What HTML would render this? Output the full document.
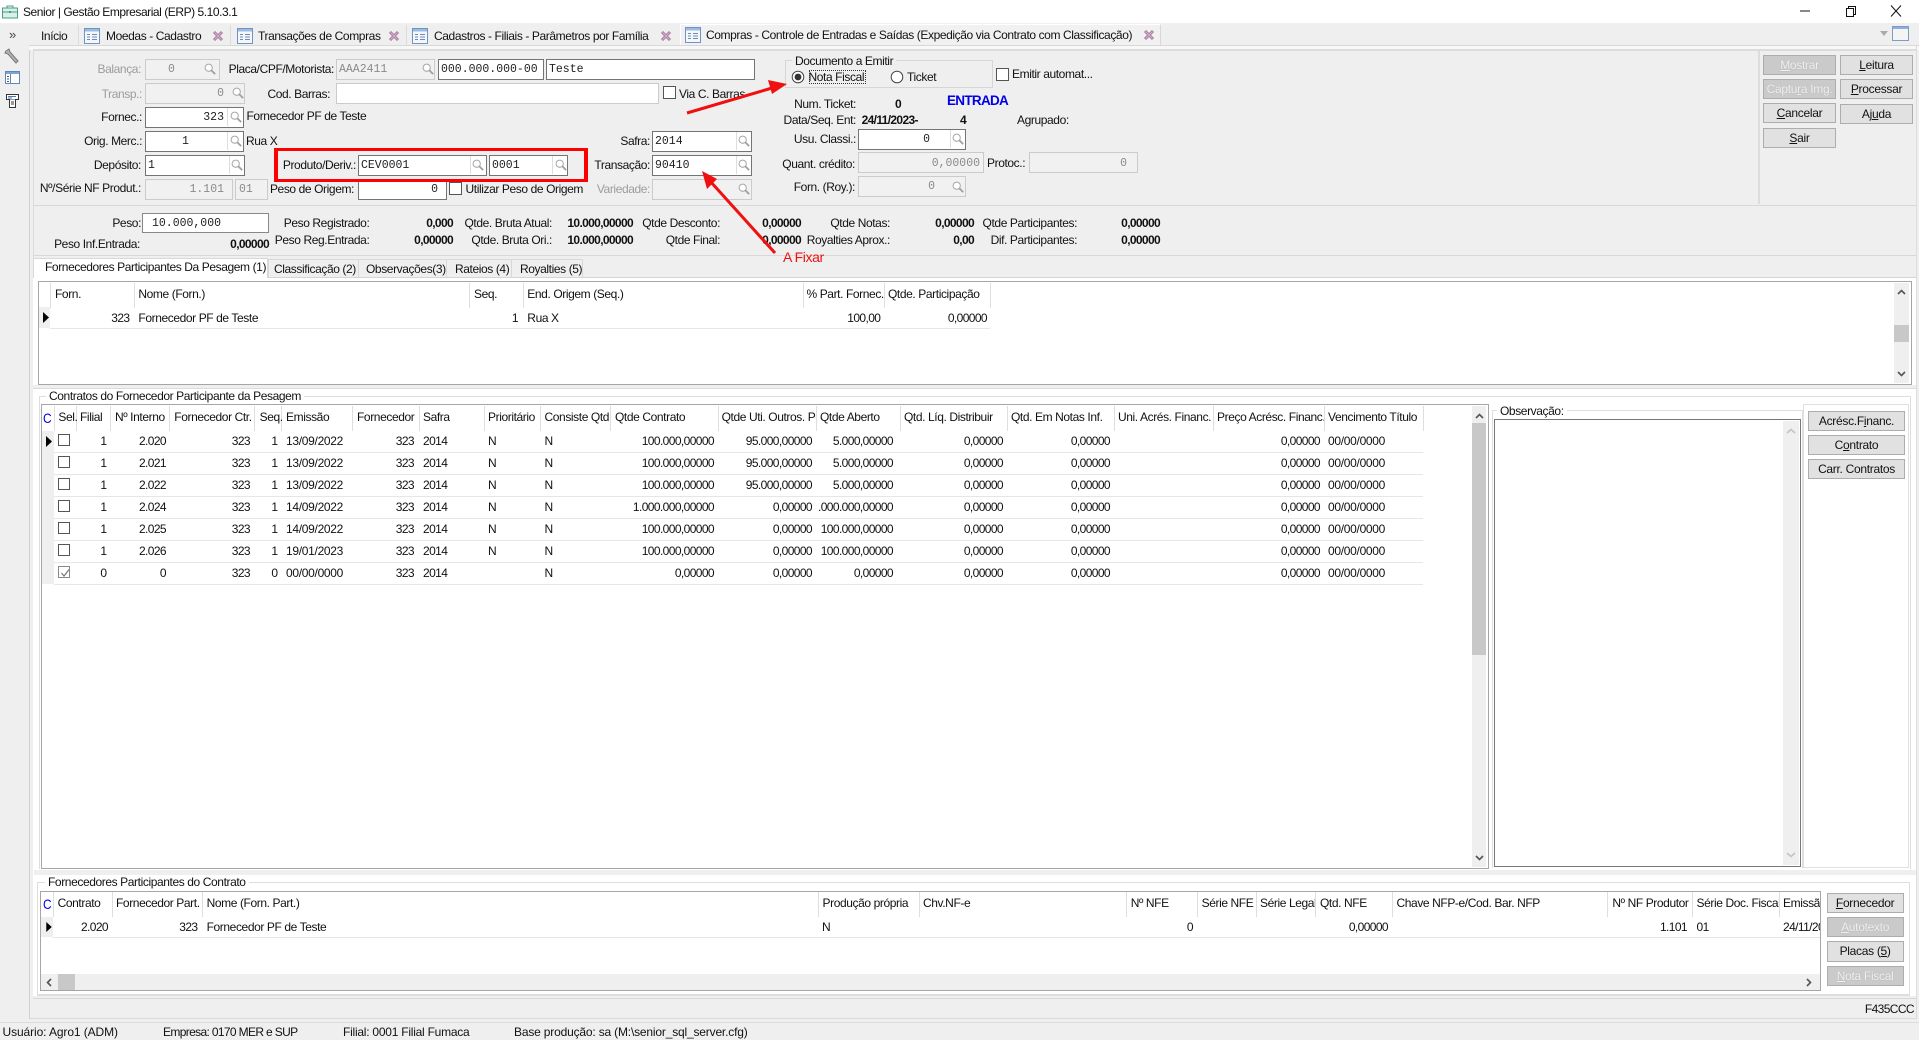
<!DOCTYPE html>
<html lang="pt"><head><meta charset="utf-8"><title>Senior | Gestão Empresarial (ERP) 5.10.3.1</title>
<style>
html,body{margin:0;padding:0}
body{position:relative;width:1919px;height:1040px;overflow:hidden;background:#efefef;font:12px/14px "Liberation Sans",sans-serif;color:#111}
.a,.t,.m,.b,.d,.btn,.off,.ck,.v,.h,svg{position:absolute}
.a{display:block}
.t,.m{white-space:nowrap;height:14px}
.t{letter-spacing:-.4px}
.r{transform:translateX(-100%)}
.m{font-family:"Liberation Mono",monospace;font-size:11.5px;color:#222;margin-top:1px}
.g{color:#9c9c9c}
.gm{color:#8a8a8a}
.t.B{font-weight:bold;letter-spacing:-.65px}
.t.n{letter-spacing:-.6px}
.b,.d{box-sizing:border-box;background:#fff;border:1px solid #747474}
.d{background:#f1f1f1;border-color:#cbcbcb}
.v{top:0;width:1px;background:#dedede}
.h{left:0;height:1px;background:#dedede}
.btn,.off{box-sizing:border-box;background:#e1e1e1;border:1px solid #adadad;text-align:center;line-height:19px;color:#111;letter-spacing:-.3px}
.off{background:#cacaca;color:#f0f0f0;text-shadow:0 0 1px #aaa}
.ck{box-sizing:border-box;width:13px;height:13px;background:#fff;border:1px solid #555}
.row{position:absolute;left:0;width:1423px;height:22px}
.row:after{content:"";position:absolute;left:54px;right:0;bottom:0;height:1px;background:#e6e6e6}
.row .t{top:3px;letter-spacing:-.6px}
.row .t.x5,.row .t.x16{letter-spacing:-.3px}
.row .t.x8,.row .t.x9{letter-spacing:0}
.x1{left:106.5px}.x2{left:166px}.x3{left:250px}.x4{left:277.5px}.x5{left:286px}.x6{left:414px}.x7{left:423px}.x8{left:488px}.x9{left:544.5px}.x10{left:714px}.x11{left:812px}.x12{left:893px}.x13{left:1003px}.x14{left:1110px}.x15{left:1320px}.x16{left:1328px}
.row .ck{left:58px;top:3px;width:12px;height:12px}
.C{font-size:14px;color:#0000e6;transform:scaleX(.85);transform-origin:left}
</style></head>
<body>
<svg width="0" height="0" style="left:0;top:0">
<defs>
<symbol id="s" viewBox="0 0 14 14"><circle cx="5.5" cy="5.5" r="4.2" fill="#fff" stroke="#a8a8a8" stroke-width="1.2"/><path d="M8.6 8.6L13 13" stroke="#a0a0a0" stroke-width="2.2" fill="none"/></symbol>
<symbol id="w" viewBox="0 0 16 16"><rect x=".5" y=".5" width="15" height="15" fill="#f4f8fc" stroke="#6f93c4"/><rect x="1" y="1" width="14" height="2.5" fill="#9dbbe0"/><path d="M3 6.5h3M3 9h3M3 11.5h3M8 6.5h5M8 9h5M8 11.5h5" stroke="#6f8aae"/></symbol>
<symbol id="x" viewBox="0 0 12 12"><path d="M2 2L10 10M10 2L2 10" stroke="#a77a9c" stroke-width="3" fill="none"/><path d="M2.5 2.5L9.5 9.5M9.5 2.5L2.5 9.5" stroke="#d2b3cb" stroke-width="1" fill="none"/></symbol>
<symbol id="tri" viewBox="0 0 6 11"><path d="M0 0L6 5.5L0 11Z" fill="#000"/></symbol>
</defs>
</svg>

<!-- title bar -->
<div class="a" style="left:0;top:0;width:1919px;height:23px;background:#fff"></div>
<svg style="left:2px;top:5px" width="17" height="14" viewBox="0 0 17 14"><rect x=".5" y="3" width="15" height="10" fill="#d9efe8" stroke="#4a9c88"/><path d="M5 3V1h6v2M1 7h14" stroke="#4a9c88" fill="none"/><rect x="7" y="6" width="2" height="2" fill="#4a9c88"/></svg>
<span class="t" style="left:23px;top:5px;letter-spacing:-.45px">Senior | Gestão Empresarial (ERP) 5.10.3.1</span>
<svg style="left:1798px;top:4px" width="112" height="14"><path d="M2 7h10" stroke="#111"/><path d="M48.5 4.5h7v8h-7zM50.5 4.5v-2h7v8h-2" fill="none" stroke="#111"/><path d="M93 1.5L103 12.5M103 1.5L93 12.5" stroke="#111" fill="none"/></svg>

<!-- tabs -->
<span class="t" style="left:9px;top:28px;font-size:13px;color:#444">»</span>
<span class="t" style="left:41px;top:29px">Início</span>
<div class="a" style="left:78px;top:25px;width:1px;height:21px;background:#ddd"></div>
<svg style="left:84px;top:28px" width="16" height="16"><use href="#w"/></svg>
<span class="t" style="left:106px;top:29px">Moedas - Cadastro</span>
<svg style="left:212px;top:30px" width="12" height="12"><use href="#x"/></svg>
<div class="a" style="left:230px;top:25px;width:1px;height:21px;background:#ddd"></div>
<svg style="left:237px;top:28px" width="16" height="16"><use href="#w"/></svg>
<span class="t" style="left:258px;top:29px">Transações de Compras</span>
<svg style="left:388px;top:30px" width="12" height="12"><use href="#x"/></svg>
<div class="a" style="left:406px;top:25px;width:1px;height:21px;background:#ddd"></div>
<svg style="left:412px;top:28px" width="16" height="16"><use href="#w"/></svg>
<span class="t" style="left:434px;top:29px">Cadastros - Filiais - Parâmetros por Família</span>
<svg style="left:660px;top:30px" width="12" height="12"><use href="#x"/></svg>
<div class="a" style="left:680px;top:24px;width:481px;height:22px;background:#f1f1f1;border:1px solid #fff;box-sizing:border-box;border-right:1px solid #d8d8d8"></div>
<svg style="left:685px;top:27px" width="16" height="16"><use href="#w"/></svg>
<span class="t" style="left:706px;top:28px">Compras - Controle de Entradas e Saídas (Expedição via Contrato com Classificação)</span>
<svg style="left:1143px;top:29px" width="12" height="12"><use href="#x"/></svg>
<svg style="left:1878px;top:26px" width="32" height="17"><path d="M2 5h8l-4 5z" fill="#aaa"/><rect x="14.5" y=".5" width="16" height="14" fill="#f4f4f4" stroke="#7c9cc8"/><rect x="15" y="1" width="15" height="2" fill="#8fb0dc"/></svg>

<!-- sidebar -->
<svg style="left:4px;top:48px" width="17" height="16" viewBox="0 0 17 16"><path d="M2 3L5 1L6 4L14 13L12 15L4 6L1 5Z" fill="#b4b4b4" stroke="#777"/></svg>
<svg style="left:5px;top:71px" width="15" height="13"><rect x=".5" y=".5" width="14" height="12" fill="#fff" stroke="#5f87bd"/><rect x="1" y="1" width="13" height="2" fill="#7fa3d3"/><path d="M5.5 3v9" stroke="#5f87bd"/><path d="M2 5.5h2M2 8h2M2 10.5h2" stroke="#555"/></svg>
<svg style="left:5px;top:93px" width="15" height="15"><rect x="1.5" y="1.5" width="12" height="5" fill="#fff" stroke="#333"/><path d="M3 3.5h8M3 5h4" stroke="#4a7ab8"/><path d="M4.5 6.5v8h6v-8M6 9h3M6 11h3" fill="#fff" stroke="#333"/></svg>

<!-- frame -->
<div class="a" style="left:29px;top:46px;width:1px;height:972px;background:#d0d0d0"></div>
<div class="a" style="left:29px;top:45px;width:1890px;height:5px;background:#f8f8f8;border-top:1px solid #d8d8d8;box-sizing:border-box"></div>
<div class="a" style="left:33px;top:49px;width:1883px;height:2px;background:#dcdcdc"></div>
<div class="a" style="left:33px;top:50px;width:1px;height:946px;background:#dcdcdc"></div>
<div class="a" style="left:1916px;top:46px;width:1px;height:972px;background:#dcdcdc"></div>
<div class="a" style="left:1758px;top:51px;width:2px;height:153px;background:#dcdcdc"></div>
<div class="a" style="left:33px;top:205px;width:1883px;height:1px;background:#d8d8d8"></div>
<div class="a" style="left:33px;top:255px;width:1883px;height:1px;background:#d8d8d8"></div>

<!-- form: row 1 -->
<span class="t r g" style="left:141px;top:62px">Balança:</span>
<div class="d" style="left:144.5px;top:58.5px;width:75px;height:21px"></div>
<span class="m gm" style="left:168px;top:62px">0</span>
<svg style="left:204px;top:63px" width="12" height="12"><use href="#s"/></svg>
<span class="t r" style="left:334px;top:62px">Placa/CPF/Motorista:</span>
<div class="d" style="left:336px;top:58.5px;width:99px;height:21px"></div>
<span class="m gm" style="left:339px;top:62px">AAA2411</span>
<svg style="left:422px;top:63px" width="12" height="12"><use href="#s"/></svg>
<div class="b" style="left:438px;top:58.5px;width:106px;height:21px"></div>
<span class="m" style="left:441px;top:62px">000.000.000-00</span>
<div class="b" style="left:546px;top:58.5px;width:209px;height:21px"></div>
<span class="m" style="left:549px;top:62px">Teste</span>

<!-- row 2 -->
<span class="t r g" style="left:142px;top:87px">Transp.:</span>
<div class="d" style="left:144.5px;top:82.5px;width:100.5px;height:21px"></div>
<span class="m r gm" style="left:224px;top:86px">0</span>
<svg style="left:232px;top:87px" width="12" height="12"><use href="#s"/></svg>
<span class="t r" style="left:330px;top:87px">Cod. Barras:</span>
<div class="d" style="left:336px;top:82.5px;width:323px;height:21px;background:#fff"></div>
<div class="ck" style="left:663px;top:86px"></div>
<span class="t" style="left:679px;top:87px">Via C. Barras</span>

<!-- row 3 -->
<span class="t r" style="left:142px;top:110px">Fornec.:</span>
<div class="b" style="left:144.5px;top:106.5px;width:99.5px;height:21px"></div>
<span class="m r" style="left:224px;top:110px">323</span>
<div class="a" style="left:227px;top:108px;width:1px;height:18px;background:#ddd"></div>
<svg style="left:230px;top:111px" width="12" height="12"><use href="#s"/></svg>
<span class="t" style="left:246.5px;top:109px">Fornecedor PF de Teste</span>

<!-- row 4 -->
<span class="t r" style="left:142px;top:134px">Orig. Merc.:</span>
<div class="b" style="left:144.5px;top:130.5px;width:99.5px;height:21px"></div>
<span class="m" style="left:182px;top:134px">1</span>
<div class="a" style="left:227px;top:132px;width:1px;height:18px;background:#ddd"></div>
<svg style="left:230px;top:135px" width="12" height="12"><use href="#s"/></svg>
<span class="t" style="left:246px;top:134px">Rua X</span>
<span class="t r" style="left:650px;top:134px">Safra:</span>
<div class="b" style="left:652px;top:130.5px;width:99.5px;height:21px"></div>
<span class="m" style="left:655px;top:134px">2014</span>
<div class="a" style="left:735.5px;top:132px;width:1px;height:18px;background:#ddd"></div>
<svg style="left:738px;top:135px" width="12" height="12"><use href="#s"/></svg>

<!-- row 5 -->
<span class="t r" style="left:141px;top:158px">Depósito:</span>
<div class="b" style="left:144.5px;top:154.5px;width:100.5px;height:21px"></div>
<span class="m" style="left:148px;top:158px">1</span>
<div class="a" style="left:229px;top:156px;width:1px;height:18px;background:#ddd"></div>
<svg style="left:231px;top:159px" width="12" height="12"><use href="#s"/></svg>
<span class="t r" style="left:356px;top:158px">Produto/Deriv.:</span>
<div class="b" style="left:358px;top:154.5px;width:128.5px;height:21px"></div>
<span class="m" style="left:361px;top:158px">CEV0001</span>
<div class="a" style="left:470px;top:156px;width:1px;height:18px;background:#ddd"></div>
<svg style="left:472px;top:159px" width="12" height="12"><use href="#s"/></svg>
<div class="b" style="left:489px;top:154.5px;width:79px;height:21px"></div>
<span class="m" style="left:492px;top:158px">0001</span>
<div class="a" style="left:552px;top:156px;width:1px;height:18px;background:#ddd"></div>
<svg style="left:555px;top:159px" width="12" height="12"><use href="#s"/></svg>
<span class="t r" style="left:650px;top:158px">Transação:</span>
<div class="b" style="left:652px;top:154.5px;width:99.5px;height:21px"></div>
<span class="m" style="left:655px;top:158px">90410</span>
<div class="a" style="left:735.5px;top:156px;width:1px;height:18px;background:#ddd"></div>
<svg style="left:738px;top:159px" width="12" height="12"><use href="#s"/></svg>

<!-- row 6 -->
<span class="t r" style="left:141px;top:181px">Nº/Série NF Produt.:</span>
<div class="d" style="left:144.5px;top:178.5px;width:88px;height:21px"></div>
<span class="m r gm" style="left:224px;top:182px">1.101</span>
<div class="d" style="left:235px;top:178.5px;width:33px;height:21px"></div>
<span class="m gm" style="left:239px;top:182px">01</span>
<span class="t r" style="left:354px;top:182px">Peso de Origem:</span>
<div class="b" style="left:358px;top:178.5px;width:88.5px;height:21px"></div>
<span class="m r" style="left:438px;top:182px">0</span>
<div class="ck" style="left:449px;top:182px"></div>
<span class="t" style="left:465.5px;top:182px">Utilizar Peso de Origem</span>
<span class="t r g" style="left:650px;top:182px">Variedade:</span>
<div class="d" style="left:652px;top:178.5px;width:99.5px;height:21px"></div>
<svg style="left:738px;top:183px" width="12" height="12"><use href="#s"/></svg>

<!-- red box -->
<div class="a" style="left:274px;top:148px;width:314px;height:34px;box-sizing:border-box;border:3px solid #f00;border-left-width:4px;border-right-width:4px"></div>

<!-- documento -->
<div class="a" style="left:784.5px;top:60px;width:208px;height:28px;box-sizing:border-box;border:1px solid #d6d6d6"></div>
<span class="t" style="left:792px;top:54px;background:#efefef;padding:0 3px">Documento a Emitir</span>
<svg style="left:791px;top:70px" width="116" height="14"><circle cx="7" cy="7" r="5.8" fill="#fff" stroke="#444"/><circle cx="7" cy="7" r="3.4" fill="#333"/><circle cx="106" cy="7" r="5.8" fill="#fff" stroke="#444"/></svg>
<span class="t" style="left:808.5px;top:70px;outline:1px dotted #333;outline-offset:-1px;width:57px">Nota Fiscal</span>
<span class="t" style="left:907px;top:70px">Ticket</span>
<div class="ck" style="left:996px;top:67.5px"></div>
<span class="t" style="left:1012px;top:67px">Emitir automat...</span>

<span class="t r" style="left:856px;top:97px">Num. Ticket:</span>
<span class="t B" style="left:895px;top:97px">0</span>
<span class="t B" style="left:947px;top:94px;font-size:13.5px;color:#0000e6;letter-spacing:-.7px">ENTRADA</span>
<span class="t r" style="left:856px;top:113px">Data/Seq. Ent:</span>
<span class="t B" style="left:861.6px;top:113px">24/11/2023-</span>
<span class="t B" style="left:960px;top:113px">4</span>
<span class="t" style="left:1017px;top:113px">Agrupado:</span>
<span class="t r" style="left:856px;top:132px">Usu. Classi.:</span>
<div class="b" style="left:858px;top:128.5px;width:108px;height:21px"></div>
<span class="m r" style="left:930px;top:132px">0</span>
<div class="a" style="left:949.5px;top:130px;width:1px;height:18px;background:#ddd"></div>
<svg style="left:952px;top:133px" width="12" height="12"><use href="#s"/></svg>
<span class="t r" style="left:855px;top:156.5px">Quant. crédito:</span>
<div class="d" style="left:858px;top:152px;width:125.7px;height:21px"></div>
<span class="m r gm" style="left:980px;top:156px">0,00000</span>
<span class="t" style="left:987px;top:155.5px">Protoc.:</span>
<div class="d" style="left:1029px;top:152px;width:108.5px;height:21px"></div>
<span class="m r gm" style="left:1127px;top:156px">0</span>
<span class="t r" style="left:855px;top:180px">Forn. (Roy.):</span>
<div class="d" style="left:858px;top:176px;width:108px;height:21px"></div>
<span class="m r gm" style="left:935px;top:179px">0</span>
<svg style="left:952px;top:181px" width="12" height="12"><use href="#s"/></svg>

<!-- right buttons -->
<div class="off" style="left:1763px;top:55px;width:73px;height:20px"><u>M</u>ostrar</div>
<div class="btn" style="left:1840px;top:55px;width:73px;height:20px"><u>L</u>eitura</div>
<div class="off" style="left:1763px;top:79px;width:73px;height:20px">Captu<u>r</u>a Img.</div>
<div class="btn" style="left:1840px;top:79px;width:73px;height:20px"><u>P</u>rocessar</div>
<div class="btn" style="left:1763px;top:103px;width:73px;height:20px"><u>C</u>ancelar</div>
<div class="btn" style="left:1840px;top:104px;width:73px;height:20px">Aj<u>u</u>da</div>
<div class="btn" style="left:1763px;top:128px;width:73px;height:20px"><u>S</u>air</div>

<!-- stats -->
<span class="t r" style="left:141px;top:216px">Peso:</span>
<div class="b" style="left:142px;top:213px;width:127px;height:20px;border-color:#888"></div>
<span class="m" style="left:152px;top:216px">10.000,000</span>
<span class="t r" style="left:369.4px;top:216px">Peso Registrado:</span>
<span class="t r B" style="left:453px;top:216px">0,000</span>
<span class="t r" style="left:552px;top:216px">Qtde. Bruta Atual:</span>
<span class="t r B" style="left:633px;top:216px">10.000,00000</span>
<span class="t r" style="left:720px;top:216px">Qtde Desconto:</span>
<span class="t r B" style="left:801px;top:216px">0,00000</span>
<span class="t r" style="left:890px;top:216px">Qtde Notas:</span>
<span class="t r B" style="left:974px;top:216px">0,00000</span>
<span class="t r" style="left:1077px;top:216px">Qtde Participantes:</span>
<span class="t r B" style="left:1160px;top:216px">0,00000</span>
<span class="t r" style="left:140px;top:237px">Peso Inf.Entrada:</span>
<span class="t r B" style="left:269px;top:237px">0,00000</span>
<span class="t r" style="left:369.4px;top:233px">Peso Reg.Entrada:</span>
<span class="t r B" style="left:453px;top:233px">0,00000</span>
<span class="t r" style="left:552px;top:233px">Qtde. Bruta Ori.:</span>
<span class="t r B" style="left:633px;top:233px">10.000,00000</span>
<span class="t r" style="left:720px;top:233px">Qtde Final:</span>
<span class="t r B" style="left:801px;top:233px">0,00000</span>
<span class="t r" style="left:890px;top:233px">Royalties Aprox.:</span>
<span class="t r B" style="left:974px;top:233px">0,00</span>
<span class="t r" style="left:1077px;top:233px">Dif. Participantes:</span>
<span class="t r B" style="left:1160px;top:233px">0,00000</span>

<!-- lower tabs -->
<div class="a" style="left:33px;top:278px;width:1883px;height:718px;background:#fff"></div>
<div class="a" style="left:33px;top:277px;width:1883px;height:1px;background:#d4d4d4"></div>
<div class="a" style="left:33px;top:258px;width:235px;height:20px;background:#fff;border:1px solid #d8d8d8;border-bottom:0;box-sizing:border-box"></div>
<span class="t" style="left:45px;top:260px">Fornecedores Participantes Da Pesagem (1)</span>
<div class="a" style="left:268px;top:259px;width:315px;height:18px;border:1px solid #d8d8d8;border-bottom:0;box-sizing:border-box"></div>
<span class="t" style="left:274px;top:262px">Classificação (2)</span>
<div class="a" style="left:358px;top:259px;width:1px;height:18px;background:#d8d8d8"></div>
<span class="t" style="left:366px;top:262px">Observações(3)</span>
<div class="a" style="left:446px;top:259px;width:1px;height:18px;background:#d8d8d8"></div>
<span class="t" style="left:455px;top:262px">Rateios (4)</span>
<div class="a" style="left:511px;top:259px;width:1px;height:18px;background:#d8d8d8"></div>
<span class="t" style="left:520px;top:262px">Royalties (5)</span>

<!-- grid 1 -->
<div class="a" style="left:37.5px;top:281px;width:1874px;height:104px;box-sizing:border-box;border:1px solid #a6a6a6;background:#fff"></div>
<div class="a" style="left:39px;top:307px;width:11px;height:21px;background:#efefef"></div>
<svg style="left:43px;top:312px" width="6" height="11"><use href="#tri"/></svg>
<div class="a" style="left:50px;top:328px;width:940px;height:1px;background:#e6e6e6"></div>
<div class="v" style="left:50px;top:283px;height:25px"></div><div class="v" style="left:133.5px;top:283px;height:25px"></div><div class="v" style="left:469px;top:283px;height:25px"></div><div class="v" style="left:522.5px;top:283px;height:25px"></div><div class="v" style="left:802.5px;top:283px;height:25px"></div><div class="v" style="left:883.7px;top:283px;height:25px"></div><div class="v" style="left:990px;top:283px;height:25px"></div>
<span class="t" style="left:55px;top:287px">Forn.</span>
<span class="t" style="left:138.4px;top:287px">Nome (Forn.)</span>
<span class="t" style="left:474px;top:287px">Seq.</span>
<span class="t" style="left:527.3px;top:287px">End. Origem (Seq.)</span>
<span class="t" style="left:806.5px;top:287px">% Part. Fornec.</span>
<span class="t" style="left:888px;top:287px">Qtde. Participação</span>
<span class="t r n" style="left:129.5px;top:311px">323</span>
<span class="t" style="left:138.4px;top:311px">Fornecedor PF de Teste</span>
<span class="t r n" style="left:518px;top:311px">1</span>
<span class="t" style="left:527.3px;top:311px">Rua X</span>
<span class="t r n" style="left:880.4px;top:311px">100,00</span>
<span class="t r n" style="left:987px;top:311px">0,00000</span>
<div class="a" style="left:1894px;top:283px;width:15px;height:100px;background:#efefef"></div>
<div class="a" style="left:1894px;top:325px;width:15px;height:17px;background:#c8c8c8"></div>
<svg style="left:1897px;top:288px" width="9" height="90"><path d="M1 6L4.5 2.5L8 6" fill="none" stroke="#555" stroke-width="1.6"/><path d="M1 84L4.5 87.5L8 84" fill="none" stroke="#555" stroke-width="1.6"/></svg>

<!-- gap -->
<div class="a" style="left:33px;top:385px;width:1883px;height:3px;background:#efefef"></div>
<div class="a" style="left:33px;top:388px;width:1883px;height:1px;background:#dcdcdc"></div>

<!-- fieldset contratos -->
<div class="a" style="left:39px;top:396px;width:1872px;height:473px;box-sizing:border-box;border:1px solid #dedede;border-bottom:0"></div>
<span class="t" style="left:46px;top:389px;background:#fff;padding:0 3px">Contratos do Fornecedor Participante da Pesagem</span>

<!-- grid 2 -->
<div class="a" style="left:41px;top:404px;width:1448px;height:465px;box-sizing:border-box;border:1px solid #a6a6a6;background:#fff"></div>
<div class="v" style="left:53.5px;top:406px;height:25px"></div><div class="v" style="left:75.5px;top:406px;height:25px"></div><div class="v" style="left:110px;top:406px;height:25px"></div><div class="v" style="left:169.4px;top:406px;height:25px"></div><div class="v" style="left:254.3px;top:406px;height:25px"></div><div class="v" style="left:281px;top:406px;height:25px"></div><div class="v" style="left:352px;top:406px;height:25px"></div><div class="v" style="left:419px;top:406px;height:25px"></div><div class="v" style="left:483.7px;top:406px;height:25px"></div><div class="v" style="left:539.6px;top:406px;height:25px"></div><div class="v" style="left:610px;top:406px;height:25px"></div><div class="v" style="left:717.6px;top:406px;height:25px"></div><div class="v" style="left:815.5px;top:406px;height:25px"></div><div class="v" style="left:899.6px;top:406px;height:25px"></div><div class="v" style="left:1006.5px;top:406px;height:25px"></div><div class="v" style="left:1113.5px;top:406px;height:25px"></div><div class="v" style="left:1212.6px;top:406px;height:25px"></div><div class="v" style="left:1323.7px;top:406px;height:25px"></div><div class="v" style="left:1423px;top:406px;height:25px"></div>
<span class="t C" style="left:43px;top:411px">C</span>
<span class="t" style="left:58.4px;top:410px">Sel.</span>
<span class="t" style="left:80px;top:410px">Filial</span>
<span class="t" style="left:115px;top:410px">Nº Interno</span>
<span class="t" style="left:174.3px;top:410px;width:80px;overflow:hidden">Fornecedor Ctr.</span>
<span class="t" style="left:259.6px;top:410px">Seq.</span>
<span class="t" style="left:286px;top:410px">Emissão</span>
<span class="t" style="left:357px;top:410px">Fornecedor</span>
<span class="t" style="left:423px;top:410px">Safra</span>
<span class="t" style="left:488px;top:410px">Prioritário</span>
<span class="t" style="left:544.5px;top:410px;width:65px;overflow:hidden">Consiste Qtd</span>
<span class="t" style="left:615px;top:410px">Qtde Contrato</span>
<span class="t" style="left:721.6px;top:410px;width:94px;overflow:hidden">Qtde Uti. Outros. Pesagem</span>
<span class="t" style="left:820px;top:410px">Qtde Aberto</span>
<span class="t" style="left:904px;top:410px">Qtd. Líq. Distribuir</span>
<span class="t" style="left:1011px;top:410px">Qtd. Em Notas Inf.</span>
<span class="t" style="left:1118px;top:410px;width:95px;overflow:hidden">Uni. Acrés. Financ.</span>
<span class="t" style="left:1217px;top:410px;width:107px;overflow:hidden">Preço Acrésc. Financ.</span>
<span class="t" style="left:1328px;top:410px">Vencimento Título</span>

<div class="a" style="left:42px;top:431px;width:11.5px;height:153px;background:#efefef"></div>
<svg style="left:46px;top:436px" width="6" height="11"><use href="#tri"/></svg>

<div class="row" style="top:431px"><div class="ck"></div><span class="t r x1">1</span><span class="t r x2">2.020</span><span class="t r x3">323</span><span class="t r x4">1</span><span class="t x5">13/09/2022</span><span class="t r x6">323</span><span class="t x7">2014</span><span class="t x8">N</span><span class="t x9">N</span><span class="t r x10">100.000,00000</span><span class="t r x11">95.000,00000</span><span class="t r x12">5.000,00000</span><span class="t r x13">0,00000</span><span class="t r x14">0,00000</span><span class="t r x15">0,00000</span><span class="t x16">00/00/0000</span></div>
<div class="row" style="top:453px"><div class="ck"></div><span class="t r x1">1</span><span class="t r x2">2.021</span><span class="t r x3">323</span><span class="t r x4">1</span><span class="t x5">13/09/2022</span><span class="t r x6">323</span><span class="t x7">2014</span><span class="t x8">N</span><span class="t x9">N</span><span class="t r x10">100.000,00000</span><span class="t r x11">95.000,00000</span><span class="t r x12">5.000,00000</span><span class="t r x13">0,00000</span><span class="t r x14">0,00000</span><span class="t r x15">0,00000</span><span class="t x16">00/00/0000</span></div>
<div class="row" style="top:475px"><div class="ck"></div><span class="t r x1">1</span><span class="t r x2">2.022</span><span class="t r x3">323</span><span class="t r x4">1</span><span class="t x5">13/09/2022</span><span class="t r x6">323</span><span class="t x7">2014</span><span class="t x8">N</span><span class="t x9">N</span><span class="t r x10">100.000,00000</span><span class="t r x11">95.000,00000</span><span class="t r x12">5.000,00000</span><span class="t r x13">0,00000</span><span class="t r x14">0,00000</span><span class="t r x15">0,00000</span><span class="t x16">00/00/0000</span></div>
<div class="row" style="top:497px"><div class="ck"></div><span class="t r x1">1</span><span class="t r x2">2.024</span><span class="t r x3">323</span><span class="t r x4">1</span><span class="t x5">14/09/2022</span><span class="t r x6">323</span><span class="t x7">2014</span><span class="t x8">N</span><span class="t x9">N</span><span class="t r x10">1.000.000,00000</span><span class="t r x11">0,00000</span><span class="t r x12">.000.000,00000</span><span class="t r x13">0,00000</span><span class="t r x14">0,00000</span><span class="t r x15">0,00000</span><span class="t x16">00/00/0000</span></div>
<div class="row" style="top:519px"><div class="ck"></div><span class="t r x1">1</span><span class="t r x2">2.025</span><span class="t r x3">323</span><span class="t r x4">1</span><span class="t x5">14/09/2022</span><span class="t r x6">323</span><span class="t x7">2014</span><span class="t x8">N</span><span class="t x9">N</span><span class="t r x10">100.000,00000</span><span class="t r x11">0,00000</span><span class="t r x12">100.000,00000</span><span class="t r x13">0,00000</span><span class="t r x14">0,00000</span><span class="t r x15">0,00000</span><span class="t x16">00/00/0000</span></div>
<div class="row" style="top:541px"><div class="ck"></div><span class="t r x1">1</span><span class="t r x2">2.026</span><span class="t r x3">323</span><span class="t r x4">1</span><span class="t x5">19/01/2023</span><span class="t r x6">323</span><span class="t x7">2014</span><span class="t x8">N</span><span class="t x9">N</span><span class="t r x10">100.000,00000</span><span class="t r x11">0,00000</span><span class="t r x12">100.000,00000</span><span class="t r x13">0,00000</span><span class="t r x14">0,00000</span><span class="t r x15">0,00000</span><span class="t x16">00/00/0000</span></div>
<div class="row" style="top:563px"><div class="ck" style="border-color:#888"><svg style="left:1px;top:1px" width="10" height="10"><path d="M1.5 5L4 8L9 1.5" fill="none" stroke="#777" stroke-width="1.2"/></svg></div><span class="t r x1">0</span><span class="t r x2">0</span><span class="t r x3">323</span><span class="t r x4">0</span><span class="t x5">00/00/0000</span><span class="t r x6">323</span><span class="t x7">2014</span><span class="t x9">N</span><span class="t r x10">0,00000</span><span class="t r x11">0,00000</span><span class="t r x12">0,00000</span><span class="t r x13">0,00000</span><span class="t r x14">0,00000</span><span class="t r x15">0,00000</span><span class="t x16">00/00/0000</span></div>

<div class="a" style="left:1472px;top:406px;width:14px;height:461px;background:#efefef"></div>
<div class="a" style="left:1472px;top:423px;width:14px;height:232px;background:#c8c8c8"></div>
<svg style="left:1475px;top:412px" width="9" height="450"><path d="M1 6L4.5 2.5L8 6" fill="none" stroke="#555" stroke-width="1.6"/><path d="M1 444L4.5 447.5L8 444" fill="none" stroke="#555" stroke-width="1.6"/></svg>

<!-- observação -->
<div class="a" style="left:1492px;top:410px;width:311px;height:458px;box-sizing:border-box;border:1px solid #dedede;border-bottom:0"></div>
<span class="t" style="left:1497px;top:404px;background:#fff;padding:0 3px">Observação:</span>
<div class="a" style="left:1494px;top:419px;width:306.5px;height:448px;box-sizing:border-box;border:1px solid #777;background:#fff"></div>
<div class="a" style="left:1783px;top:421px;width:16px;height:444px;background:#efefef"></div>
<svg style="left:1786px;top:427px" width="10" height="432"><path d="M1 6L5 2.5L9 6" fill="none" stroke="#c4c4c4" stroke-width="1.6"/><path d="M1 426L5 429.5L9 426" fill="none" stroke="#c4c4c4" stroke-width="1.6"/></svg>
<div class="a" style="left:1803px;top:404px;width:106px;height:464px;box-sizing:border-box;border:1px solid #e0e0e0"></div>
<div class="btn" style="left:1808px;top:411px;width:97px;height:20px">Acrésc.F<u>i</u>nanc.</div>
<div class="btn" style="left:1808px;top:435px;width:97px;height:20px">C<u>o</u>ntrato</div>
<div class="btn" style="left:1808px;top:459px;width:97px;height:20px">Carr. Contratos</div>

<!-- gap 2 -->
<div class="a" style="left:34px;top:870px;width:1882px;height:5px;background:#efefef"></div>

<!-- fieldset participantes -->
<div class="a" style="left:37px;top:882px;width:1873px;height:114px;box-sizing:border-box;border:1px solid #dedede;border-bottom:2px solid #dedede"></div>
<span class="t" style="left:45px;top:875px;background:#fff;padding:0 3px">Fornecedores Participantes do Contrato</span>
<div class="a" style="left:40px;top:891px;width:1781px;height:100px;box-sizing:border-box;border:1px solid #a6a6a6;background:#fff"></div>
<div class="v" style="left:53px;top:892px;height:25px"></div><div class="v" style="left:111.7px;top:892px;height:25px"></div><div class="v" style="left:201.5px;top:892px;height:25px"></div><div class="v" style="left:818px;top:892px;height:25px"></div><div class="v" style="left:919px;top:892px;height:25px"></div><div class="v" style="left:1126px;top:892px;height:25px"></div><div class="v" style="left:1196.5px;top:892px;height:25px"></div><div class="v" style="left:1255.7px;top:892px;height:25px"></div><div class="v" style="left:1315.4px;top:892px;height:25px"></div><div class="v" style="left:1391.5px;top:892px;height:25px"></div><div class="v" style="left:1607px;top:892px;height:25px"></div><div class="v" style="left:1691.5px;top:892px;height:25px"></div><div class="v" style="left:1778.7px;top:892px;height:25px"></div>
<span class="t C" style="left:43px;top:897px">C</span>
<span class="t" style="left:57.6px;top:896px">Contrato</span>
<span class="t" style="left:116px;top:896px;width:86px;overflow:hidden">Fornecedor Part.</span>
<span class="t" style="left:206.6px;top:896px">Nome (Forn. Part.)</span>
<span class="t" style="left:822.5px;top:896px">Produção própria</span>
<span class="t" style="left:923px;top:896px">Chv.NF-e</span>
<span class="t" style="left:1130.7px;top:896px">Nº NFE</span>
<span class="t" style="left:1201.6px;top:896px">Série NFE</span>
<span class="t" style="left:1260px;top:896px;width:55px;overflow:hidden">Série Legal</span>
<span class="t" style="left:1320px;top:896px">Qtd. NFE</span>
<span class="t" style="left:1396.5px;top:896px">Chave NFP-e/Cod. Bar. NFP</span>
<span class="t" style="left:1612.4px;top:896px;width:79px;overflow:hidden">Nº NF Produtor</span>
<span class="t" style="left:1696.5px;top:896px;width:82px;overflow:hidden">Série Doc. Fiscal</span>
<span class="t" style="left:1783px;top:896px;width:37px;overflow:hidden">Emissão</span>
<div class="a" style="left:41px;top:917px;width:12px;height:20px;background:#efefef"></div>
<svg style="left:45.5px;top:922px" width="6" height="10"><use href="#tri"/></svg>
<div class="a" style="left:53px;top:937px;width:1767px;height:1px;background:#e6e6e6"></div>
<span class="t r n" style="left:108px;top:920px">2.020</span>
<span class="t r n" style="left:197.5px;top:920px">323</span>
<span class="t" style="left:206.6px;top:920px">Fornecedor PF de Teste</span>
<span class="t" style="left:822px;top:920px">N</span>
<span class="t r n" style="left:1193px;top:920px">0</span>
<span class="t r n" style="left:1388px;top:920px">0,00000</span>
<span class="t r n" style="left:1687px;top:920px">1.101</span>
<span class="t n" style="left:1696.5px;top:920px">01</span>
<span class="t n" style="left:1783px;top:920px;width:37px;overflow:hidden">24/11/2023</span>
<div class="a" style="left:41px;top:974px;width:1779px;height:16px;background:#efefef"></div>
<div class="a" style="left:58px;top:974px;width:17px;height:16px;background:#c8c8c8"></div>
<svg style="left:45px;top:978px" width="1770" height="9"><path d="M6 1L2.5 4.5L6 8" fill="none" stroke="#555" stroke-width="1.6"/><path d="M1762 1L1765.5 4.5L1762 8" fill="none" stroke="#555" stroke-width="1.6"/></svg>
<div class="btn" style="left:1826.6px;top:893px;width:77px;height:20px"><u>F</u>ornecedor</div>
<div class="off" style="left:1826.6px;top:917px;width:77px;height:20px"><u>A</u>utotexto</div>
<div class="btn" style="left:1826.6px;top:941px;width:77px;height:21px">Placas (<u>5</u>)</div>
<div class="off" style="left:1826.6px;top:966px;width:77px;height:20px"><u>N</u>ota Fiscal</div>

<!-- bottom -->
<div class="a" style="left:33px;top:998px;width:1883px;height:1px;background:#d8d8d8"></div>
<div class="a" style="left:29px;top:1018px;width:1888px;height:1px;background:#d8d8d8"></div>
<div class="a" style="left:0;top:1022px;width:1919px;height:1px;background:#dcdcdc"></div>
<span class="t r" style="left:1914px;top:1002px;letter-spacing:-.6px">F435CCC</span>
<span class="t" style="left:2.5px;top:1025px;letter-spacing:-.1px">Usuário: Agro1 (ADM)</span>
<span class="t" style="left:163px;top:1025px;letter-spacing:-.65px">Empresa: 0170 MER e SUP</span>
<span class="t" style="left:343px;top:1025px;letter-spacing:-.24px">Filial: 0001 Filial Fumaca</span>
<span class="t" style="left:514px;top:1025px;letter-spacing:-.18px">Base produção: sa (M:\senior_sql_server.cfg)</span>

<!-- annotations -->
<svg style="left:0;top:0" width="1919" height="1040">
<path d="M687 113L772 88" stroke="#f01010" stroke-width="3" fill="none"/>
<path d="M787 84L768 80L772 94Z" fill="#f01010"/>
<path d="M775 253L710 181" stroke="#f01010" stroke-width="3" fill="none"/>
<path d="M702 171L717 179L707 189Z" fill="#f01010"/>
</svg>
<span class="t" style="left:783px;top:250px;font-size:14px;color:#f01010">A Fixar</span>
</body></html>
